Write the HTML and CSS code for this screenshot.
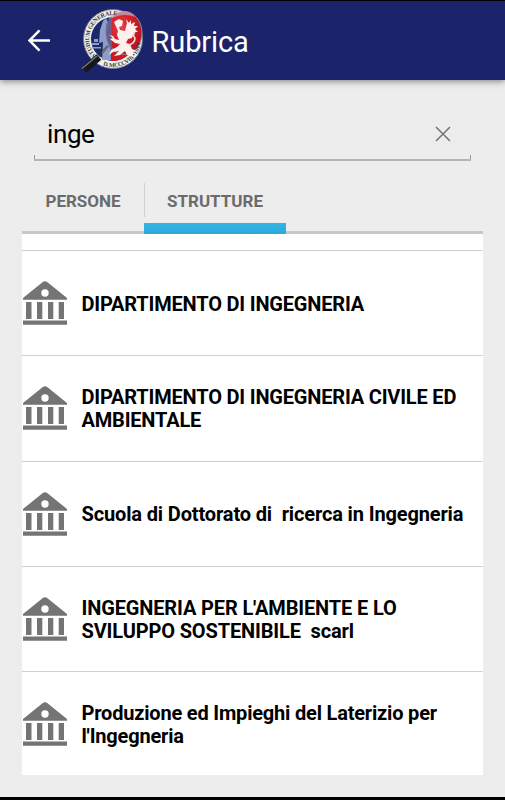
FILE: index.html
```html
<!DOCTYPE html>
<html lang="it">
<head>
<meta charset="utf-8">
<title>Rubrica</title>
<link rel="stylesheet" href="styles.css">
</head>
<body>
<svg width="0" height="0" class="defs" aria-hidden="true">
  <symbol id="bank" viewBox="0 0 44 44">
    <path fill-rule="evenodd" d="M0 18.700V17L19.500 1.200Q22 -.5 24.500 1.200L44 17V18.700ZM22 8.300a3.700 3.700 0 1 0 0 7.400a3.700 3.700 0 1 0 0-7.400Z"/>
    <path d="M3 21H8.500V38H3ZM14 21H19.300V38H14ZM25 21H30.300V38H25ZM35.700 21H41V38H35.700ZM0 39.500H44V43.700H0Z"/>
  </symbol>
</svg>
<header class="bar">
  <svg class="back" viewBox="0 0 24 24"><path d="M23 12H2M12 1.500L1.500 12L12 22.500"/></svg>
  <svg class="logo" viewBox="0 0 64 66">
    <defs>
      <path id="ring" d="M15.200 47.800A23.800 23.800 0 0 1 37 7.700"/>
      <path id="ringLow" d="M22 57.200A28 28 0 0 0 59.800 34"/>
      <radialGradient id="lens" cx=".4" cy=".35" r=".7"><stop offset="0" stop-color="#dc4550"/><stop offset=".5" stop-color="#d21d27"/><stop offset="1" stop-color="#b01521"/></radialGradient>
    </defs>
    <circle cx="32" cy="31" r="29.500" fill="#eeeeeb" stroke="#777b8d"/>
    <circle cx="32" cy="31" r="22" fill="#1c286b"/>
    <path fill="#ce1923" d="M30 9H32A22 22 0 0 1 32 53H30Z"/>
    <path fill="#8f9cc6" d="M19 22l3-9 3-3 3 6 1 10 1 26h-9l1-18-4 1ZM11 35h7v2h-7ZM13 31h4v3h-4ZM11 39h9v1.500h-9Z"/>
    <ellipse cx="43.500" cy="25" rx="17.500" ry="21.500" fill="url(#lens)" stroke="#8d8f9e" stroke-width="1"/>
    <path fill="#c4a9bd" opacity=".75" d="M27 12q4-8 14-9q9 0 13 6q-12-5-27 3Z"/>
    <path fill="#5a6598" opacity=".85" d="M25 17Q28 10 31 9V43Q23 32 25 17Z"/>
    <text class="seal"><textPath href="#ring" textLength="60">STUDIUM GENERALE</textPath></text>
    <text class="seal"><textPath href="#ringLow" textLength="50">D. MCCCVIII • ISSN</textPath></text>
    <path fill="#fff0ed" d="M33 14l5-3 4 2-1 5-3 1 1 3 5 1 2-8-1-4 3 4 2-3 0 4 4-2-1 4 4 0-3 3 3 3-4 0-2 6-4 1-2 4 4 1 2 5 5 2-4 1 0 5-6-2-2-4-5 4-6 1 5-5-6 1-4 3 2-5 6-3 3-3-5-1-5-4 3-1-4-3 4 1 2 3 4 1-2-5 1-4Z"/>
    <path fill="none" stroke="#fbdedb" stroke-width="1.500" d="M48 37q6-2 6-7q-3-3 0-6"/>
    <path fill="none" stroke="#303338" stroke-width="2" d="M27 38L18 48"/>
    <path fill="none" stroke="#15171a" stroke-width="7" d="M18 49L3 62"/>
    <path fill="none" stroke="#777a7d" stroke-width="1.400" d="M16 48L1 60.500M21 45l6-7"/>
  </svg>
  <h1 class="title">Rubrica</h1>
</header>
<main class="content">
  <div class="search">
    <span class="query">inge</span>
    <svg class="clear" viewBox="0 0 16 16"><path d="M1 1L15 15M15 1L1 15"/></svg>
  </div>
  <nav class="tabs">
    <div class="tab">PERSONE</div>
    <div class="tab active">STRUTTURE</div>
  </nav>
  <ul class="list">
    <li class="stub"></li>
    <li class="row"><svg class="bank"><use href="#bank"/></svg><p class="name">DIPARTIMENTO DI INGEGNERIA</p></li>
    <li class="row"><svg class="bank"><use href="#bank"/></svg><p class="name">DIPARTIMENTO DI INGEGNERIA CIVILE ED<br>AMBIENTALE</p></li>
    <li class="row"><svg class="bank"><use href="#bank"/></svg><p class="name loose">Scuola di Dottorato di&nbsp; ricerca in Ingegneria</p></li>
    <li class="row"><svg class="bank"><use href="#bank"/></svg><p class="name loose">INGEGNERIA PER L'AMBIENTE E LO<br>SVILUPPO SOSTENIBILE&nbsp; scarl</p></li>
    <li class="row"><svg class="bank"><use href="#bank"/></svg><p class="name">Produzione ed Impieghi del Laterizio per<br>l'Ingegneria</p></li>
  </ul>
</main>
</body>
</html>
```
FILE: styles.css
```css
* { box-sizing: border-box; }
body {
  margin: 0;
  height: 800px;
  overflow: hidden;
  display: flex;
  flex-direction: column;
  background: #ededed;
  border-top: 1px solid #000;
  border-bottom: 3px solid #000;
  font-family: Roboto, "Liberation Sans", sans-serif;
  color: #000;
}
.defs { position: absolute; }
.bar {
  flex: none;
  height: 79px;
  display: flex;
  align-items: center;
  padding-left: 28px;
  background: #1b236a;
  box-shadow: 0 1px 7px rgba(0, 0, 0, .5);
}
.back { width: 23px; height: 23px; fill: none; stroke: #fff; stroke-width: 2.6; }
.logo { width: 64px; height: 66px; margin-left: 30px; }
.seal { font: bold 6px "Liberation Serif", serif; fill: #35363b; }
.title { margin: 3px 0 0 6.5px; font-size: 29px; font-weight: 400; letter-spacing: -.1px; color: #fff; }
.content { flex: none; padding: 30px 22px 0; }
.search {
  height: 51px;
  margin: 0 12px;
  padding: 0 20px 2px 13px;
  display: flex;
  align-items: center;
  justify-content: space-between;
  border-bottom: 2px solid #b5b5b5;
  background: linear-gradient(#999, #999) left bottom / 1px 4px no-repeat,
    linear-gradient(#999, #999) right bottom / 1px 4px no-repeat;
}
.query { font-size: 26px; letter-spacing: -.4px; }
.clear { width: 16px; height: 16px; fill: none; stroke: #777; stroke-width: 1.6; }
.tabs {
  height: 73px;
  display: flex;
  align-items: flex-end;
  border-bottom: 3px solid #c8c8c8;
}
.tab {
  height: 64px;
  width: 122px;
  padding-top: 3px;
  display: flex;
  align-items: center;
  justify-content: center;
  font-size: 17px;
  font-weight: 700;
  color: #6b6b6b;
}
.active {
  width: 142px;
  margin-bottom: -3px;
  height: 67px;
  padding-bottom: 3px;
  background: linear-gradient(#d0d0d0, #d0d0d0) left 16px / 1px 34px no-repeat,
    linear-gradient(#33b5e5, #2ba8da) left bottom / 100% 11px no-repeat;
}
.list { list-style: none; margin: 0; padding: 0; height: 541px; background: #fff; }
.stub { height: 16px; }
.row {
  height: 105.25px;
  display: flex;
  align-items: center;
  border-top: 1px solid #d0d0d0;
}
.bank { flex: none; width: 44px; height: 44px; margin-left: 1px; fill: #747474; }
.name {
  margin: 2px 0 0 14.5px;
  font-size: 20px;
  line-height: 23px;
  font-weight: 700;
  letter-spacing: -.19px;
  white-space: nowrap;
}
.loose { letter-spacing: -.14px; }
```
